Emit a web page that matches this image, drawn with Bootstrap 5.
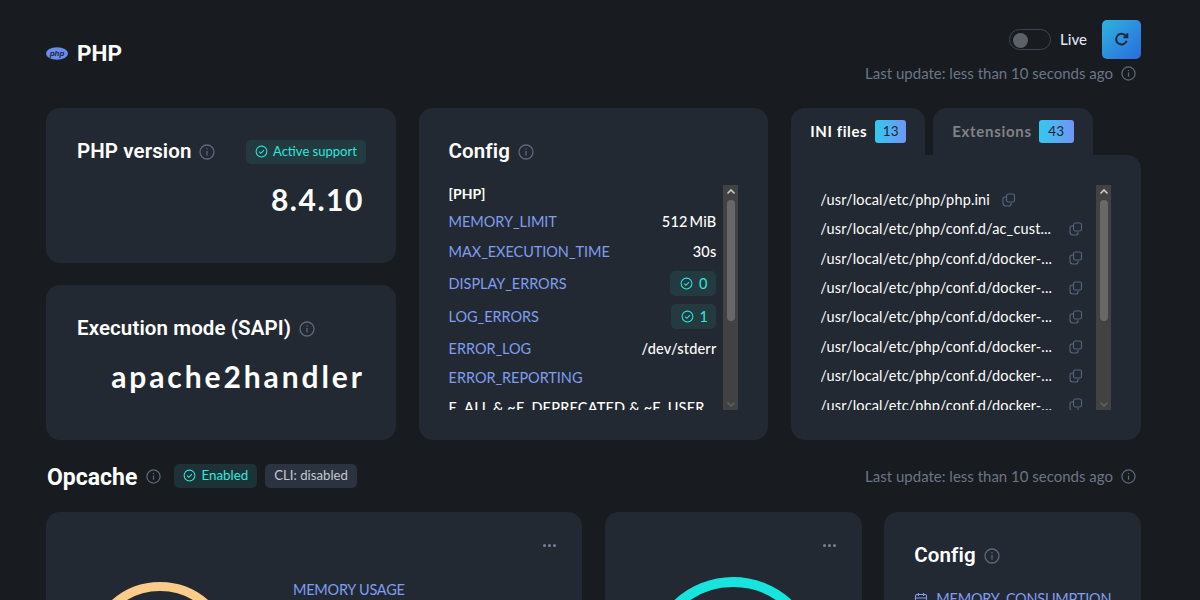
<!DOCTYPE html>
<html lang="en">
<head>
<meta charset="utf-8">
<title>PHP</title>
<link rel="stylesheet" href="https://cdn.jsdelivr.net/npm/bootstrap@5.3.0/dist/css/bootstrap.min.css">
<style>
html,body{height:600px;overflow:hidden}
body{background:#181c20;color:#fff;font-family:"Lato","Noto Sans",sans-serif;font-size:14px}
.pg{width:1095px;margin-left:46px;padding-top:20px}
.rowx{--bs-gutter-x:22.8px;--bs-gutter-y:0}
.hd{font-family:Roboto,sans-serif;font-weight:700;margin:0;color:#fff}
.hd-main{font-size:22.5px}
.hd-op{font-size:23px;margin-left:1px;margin-top:3px}
.hd-card{font-size:20.5px;font-weight:600;line-height:27px;letter-spacing:.1px}
.ico{color:#5f687a;flex:none}
.tile{background:#232932;border-radius:14px}
.muted-t{color:#6b7587;font-size:15px}
.upd-top{margin-top:3px}
.ver{font-size:30px;font-weight:700;letter-spacing:1.5px;line-height:36px;text-align:right;margin-top:16px;padding-right:2px}
.ver-w{letter-spacing:2.9px;padding-right:1px}
.head-line{height:27px}
.pill{display:inline-flex;align-items:center;gap:5px;border-radius:5px;font-size:13px;height:24px;padding:0 9px;background:#233a40;color:#2ee8dd}
.pill-g{background:#2b3340;color:#c3c8d0;font-size:13.2px;margin-top:-1px}
.pill-e{background:#1d3236;font-size:13.4px;margin-top:-1px}
.pill-n{font-size:14.5px;gap:6px;height:25px;padding:0 9px 0 10px}
.pill-one{letter-spacing:-3.6px;padding-right:12px}
.sw{width:42px;height:21px;border:1px solid #3f4652;border-radius:11px;display:block;padding:3px}
.sw i{display:block;width:15px;height:15px;border-radius:50%;background:#5c6168}
.refresh{width:39px;height:39px;border-radius:5px;border:0;background:linear-gradient(135deg,#2fb4dc,#2a6adf);padding:0;display:flex;align-items:center;justify-content:center}
.tabx{height:47px;border-radius:14px 14px 0 0;background:#232932;display:flex;align-items:center;gap:8px;padding:0 0 0 19px;font-weight:700;font-size:15px;letter-spacing:.6px;width:134px}
.tabx.off{width:160px;color:#7f8388;margin-left:8px;letter-spacing:.7px;gap:7px}
.cnt{background:linear-gradient(90deg,#33c9f0,#6f95f5);border-radius:3px;color:#1d2530;font-size:13.5px;font-weight:400;height:23px;padding:0 7.5px;display:flex;align-items:center;letter-spacing:.3px}
.off .cnt{padding:0 9.5px}
.panel{background:#232932;border-radius:0 14px 14px 14px;height:285px;padding:30px 30px 0 30px}
.scrollbox{height:225px;overflow:hidden;position:relative;padding-right:22px}
.sbar{position:absolute;right:0;top:0;bottom:0;width:15px;background:#424242}
.sbar i{position:absolute;left:3.5px;top:15px;width:8px;height:121px;border-radius:4px;background:#686868}
.sbar svg{position:absolute;left:2.5px}
.ln{display:flex;justify-content:space-between;align-items:center;font-size:14.5px}
.ln .k{color:#7f9df0;letter-spacing:-.05px}
.ln .v{font-weight:500;color:#fff;letter-spacing:.2px;word-spacing:-2px}
.ln .tail{padding-top:3px;word-spacing:0}
.ini{display:flex;align-items:center;justify-content:space-between;height:29.4px;font-size:14.5px;color:#fff;letter-spacing:.15px;padding-right:6px;margin-left:-1px}
.ini span{white-space:nowrap}
.ini-first{justify-content:flex-start;gap:12px}
.dots{display:flex;gap:2px;top:32px;right:26px}
.dots i{width:3px;height:3px;background:#77829a;border-radius:50%}
.bluek{color:#7f9df0;font-size:14.5px;letter-spacing:-.25px}
.gauge{position:absolute;border-radius:50%;border-style:solid}
.g1{width:146px;height:146px;left:41px;top:70px;border-width:9px;border-color:#ffcb8a}
.g2{width:172px;height:172px;left:42px;top:65px;border-width:10px;border-color:#17e5dd}
</style>
</head>
<body>
<main class="pg">
  <header class="d-flex justify-content-between" style="height:88px">
    <div class="d-flex align-items-center gap-2" style="height:66px">
      <svg width="22" height="13" viewBox="0 0 22 13" style="margin-right:1px"><ellipse cx="11" cy="6.5" rx="11" ry="6.2" fill="#6b8cee"/><text x="11" y="9" font-size="8" font-style="italic" font-weight="700" font-family="Liberation Sans" text-anchor="middle" fill="#1d2633">php</text></svg>
      <h1 class="hd hd-main">PHP</h1>
    </div>
    <div class="d-flex flex-column align-items-end">
      <div class="d-flex align-items-center">
        <span class="sw"><i></i></span>
        <span class="fw-medium" style="font-size:15px;color:#dfe6f5;margin-left:9px">Live</span>
        <button class="refresh" style="margin-left:15px" type="button" aria-label="Refresh"><svg width="15" height="15" viewBox="0 0 14 14" fill="none" stroke="#1b2a3a" stroke-width="1.9"><path d="M11.8 8.2A5 5 0 1 1 10.6 3.2L12 4.6"/><path d="M12.4 1.2v3.6H8.8"/></svg></button>
      </div>
      <div class="d-flex align-items-center muted-t gap-2 upd-top" style="padding-right:5px">Last update: less than 10 seconds ago
        <svg class="ico" width="15" height="15" viewBox="0 0 16 16" fill="none" stroke="currentColor" stroke-width="1.3"><circle cx="8" cy="8" r="7"/><path d="M8 7v4.5M8 4.2v1.2"/></svg>
      </div>
    </div>
  </header>

  <div class="row rowx" style="height:332px">
    <div class="col-4 d-flex flex-column justify-content-between">
      <section class="tile" style="height:155px;padding:30px 30px 0 31px">
        <div class="d-flex align-items-center head-line">
          <h2 class="hd hd-card">PHP version</h2>
          <svg class="ico ms-2" width="16" height="16" viewBox="0 0 16 16" fill="none" stroke="currentColor" stroke-width="1.3"><circle cx="8" cy="8" r="7"/><path d="M8 7v4.5M8 4.2v1.2"/></svg>
          <span class="pill ms-auto"><svg width="13" height="13" viewBox="0 0 14 14" fill="none" stroke="currentColor" stroke-width="1.1"><circle cx="7" cy="7" r="5.8"/><path d="M4.4 7.2l1.9 1.7 3.4-3.4"/></svg>Active support</span>
        </div>
        <div class="ver">8.4.10</div>
      </section>
      <section class="tile" style="height:155px;padding:30px 30px 0 31px">
        <div class="d-flex align-items-center head-line">
          <h2 class="hd hd-card">Execution mode (SAPI)</h2>
          <svg class="ico ms-2" width="16" height="16" viewBox="0 0 16 16" fill="none" stroke="currentColor" stroke-width="1.3"><circle cx="8" cy="8" r="7"/><path d="M8 7v4.5M8 4.2v1.2"/></svg>
        </div>
        <div class="ver ver-w">apache2handler</div>
      </section>
    </div>
    <div class="col-4">
      <section class="tile h-100" style="padding:30px 30px 0 30px">
        <div class="d-flex align-items-center head-line">
          <h2 class="hd hd-card">Config</h2>
          <svg class="ico ms-2" width="16" height="16" viewBox="0 0 16 16" fill="none" stroke="currentColor" stroke-width="1.3"><circle cx="8" cy="8" r="7"/><path d="M8 7v4.5M8 4.2v1.2"/></svg>
        </div>
        <div class="scrollbox" style="margin-top:20px">
          <div class="sbar"><svg style="top:3px" width="10" height="8" viewBox="0 0 10 8" fill="none" stroke="#c8c8c8" stroke-width="1.6"><path d="M1.5 5.5L5 2l3.5 3.5"/></svg><i></i><svg style="bottom:2px" width="10" height="8" viewBox="0 0 10 8" fill="none" stroke="#5f5f5f" stroke-width="1.6"><path d="M1.5 2.5L5 6l3.5-3.5"/></svg></div>
          <div class="fw-bold" style="font-size:14px;height:22px;line-height:18px">[PHP]</div>
          <div class="ln" style="height:29px"><span class="k">MEMORY_LIMIT</span><span class="v">512 MiB</span></div>
          <div class="ln" style="height:31px"><span class="k">MAX_EXECUTION_TIME</span><span class="v">30s</span></div>
          <div class="ln" style="height:33px"><span class="k">DISPLAY_ERRORS</span><span class="pill pill-n"><svg width="13" height="13" viewBox="0 0 14 14" fill="none" stroke="currentColor" stroke-width="1.1"><circle cx="7" cy="7" r="5.8"/><path d="M4.4 7.2l1.9 1.7 3.4-3.4"/></svg>0</span></div>
          <div class="ln" style="height:33px"><span class="k">LOG_ERRORS</span><span class="pill pill-n pill-one"><svg width="13" height="13" viewBox="0 0 14 14" fill="none" stroke="currentColor" stroke-width="1.1"><circle cx="7" cy="7" r="5.8"/><path d="M4.4 7.2l1.9 1.7 3.4-3.4"/></svg>1</span></div>
          <div class="ln" style="height:31px"><span class="k">ERROR_LOG</span><span class="v">/dev/stderr</span></div>
          <div class="ln" style="height:28px"><span class="k">ERROR_REPORTING</span></div>
          <div class="ln" style="height:28px"><span class="v text-nowrap tail">E_ALL &amp; ~E_DEPRECATED &amp; ~E_USER</span></div>
        </div>
      </section>
    </div>
    <div class="col-4">
      <div class="d-flex">
        <div class="tabx">INI files <span class="cnt">13</span></div>
        <div class="tabx off">Extensions <span class="cnt">43</span></div>
      </div>
      <div class="panel">
        <div class="scrollbox">
          <div class="sbar"><svg style="top:3px" width="10" height="8" viewBox="0 0 10 8" fill="none" stroke="#c8c8c8" stroke-width="1.6"><path d="M1.5 5.5L5 2l3.5 3.5"/></svg><i></i><svg style="bottom:2px" width="10" height="8" viewBox="0 0 10 8" fill="none" stroke="#5f5f5f" stroke-width="1.6"><path d="M1.5 2.5L5 6l3.5-3.5"/></svg></div>
          <div class="ini ini-first"><span>/usr/local/etc/php/php.ini</span><svg width="14" height="14" viewBox="0 0 14 14" fill="none" stroke="#556680" stroke-width="1.1"><rect x="4.5" y="1" width="8" height="8" rx="1.8"/><path d="M4 4H3a2 2 0 0 0-2 2v4a3 3 0 0 0 3 3h3a2 2 0 0 0 2-2v-1"/></svg></div>
          <div class="ini"><span>/usr/local/etc/php/conf.d/ac_cust...</span><svg width="14" height="14" viewBox="0 0 14 14" fill="none" stroke="#556680" stroke-width="1.1"><rect x="4.5" y="1" width="8" height="8" rx="1.8"/><path d="M4 4H3a2 2 0 0 0-2 2v4a3 3 0 0 0 3 3h3a2 2 0 0 0 2-2v-1"/></svg></div>
          <div class="ini"><span>/usr/local/etc/php/conf.d/docker-...</span><svg width="14" height="14" viewBox="0 0 14 14" fill="none" stroke="#556680" stroke-width="1.1"><rect x="4.5" y="1" width="8" height="8" rx="1.8"/><path d="M4 4H3a2 2 0 0 0-2 2v4a3 3 0 0 0 3 3h3a2 2 0 0 0 2-2v-1"/></svg></div>
          <div class="ini"><span>/usr/local/etc/php/conf.d/docker-...</span><svg width="14" height="14" viewBox="0 0 14 14" fill="none" stroke="#556680" stroke-width="1.1"><rect x="4.5" y="1" width="8" height="8" rx="1.8"/><path d="M4 4H3a2 2 0 0 0-2 2v4a3 3 0 0 0 3 3h3a2 2 0 0 0 2-2v-1"/></svg></div>
          <div class="ini"><span>/usr/local/etc/php/conf.d/docker-...</span><svg width="14" height="14" viewBox="0 0 14 14" fill="none" stroke="#556680" stroke-width="1.1"><rect x="4.5" y="1" width="8" height="8" rx="1.8"/><path d="M4 4H3a2 2 0 0 0-2 2v4a3 3 0 0 0 3 3h3a2 2 0 0 0 2-2v-1"/></svg></div>
          <div class="ini"><span>/usr/local/etc/php/conf.d/docker-...</span><svg width="14" height="14" viewBox="0 0 14 14" fill="none" stroke="#556680" stroke-width="1.1"><rect x="4.5" y="1" width="8" height="8" rx="1.8"/><path d="M4 4H3a2 2 0 0 0-2 2v4a3 3 0 0 0 3 3h3a2 2 0 0 0 2-2v-1"/></svg></div>
          <div class="ini"><span>/usr/local/etc/php/conf.d/docker-...</span><svg width="14" height="14" viewBox="0 0 14 14" fill="none" stroke="#556680" stroke-width="1.1"><rect x="4.5" y="1" width="8" height="8" rx="1.8"/><path d="M4 4H3a2 2 0 0 0-2 2v4a3 3 0 0 0 3 3h3a2 2 0 0 0 2-2v-1"/></svg></div>
          <div class="ini"><span>/usr/local/etc/php/conf.d/docker-...</span><svg width="14" height="14" viewBox="0 0 14 14" fill="none" stroke="#556680" stroke-width="1.1"><rect x="4.5" y="1" width="8" height="8" rx="1.8"/><path d="M4 4H3a2 2 0 0 0-2 2v4a3 3 0 0 0 3 3h3a2 2 0 0 0 2-2v-1"/></svg></div>
        </div>
      </div>
    </div>
  </div>

  <div class="d-flex align-items-center" style="height:72px">
    <h2 class="hd hd-op">Opcache</h2>
    <svg class="ico" style="margin-left:9px" width="15" height="15" viewBox="0 0 16 16" fill="none" stroke="currentColor" stroke-width="1.3"><circle cx="8" cy="8" r="7"/><path d="M8 7v4.5M8 4.2v1.2"/></svg>
    <span class="pill pill-e" style="margin-left:13px"><svg width="13" height="13" viewBox="0 0 14 14" fill="none" stroke="currentColor" stroke-width="1.1"><circle cx="7" cy="7" r="5.8"/><path d="M4.4 7.2l1.9 1.7 3.4-3.4"/></svg>Enabled</span>
    <span class="pill pill-g ms-2">CLI: disabled</span>
    <div class="d-flex align-items-center muted-t gap-2 ms-auto" style="padding-right:5px">Last update: less than 10 seconds ago
      <svg class="ico" width="15" height="15" viewBox="0 0 16 16" fill="none" stroke="currentColor" stroke-width="1.3"><circle cx="8" cy="8" r="7"/><path d="M8 7v4.5M8 4.2v1.2"/></svg>
    </div>
  </div>

  <div class="row rowx">
    <div class="col-6">
      <section class="tile position-relative" style="height:300px">
        <div class="dots position-absolute"><i></i><i></i><i></i></div>
        <div class="gauge g1"></div>
        <div class="bluek position-absolute" style="left:247px;top:67px">MEMORY USAGE</div>
      </section>
    </div>
    <div class="col-3">
      <section class="tile position-relative" style="height:300px">
        <div class="dots position-absolute"><i></i><i></i><i></i></div>
        <div class="gauge g2"></div>
      </section>
    </div>
    <div class="col-3">
      <section class="tile" style="height:300px;padding:30px 20px 0 30px">
        <div class="d-flex align-items-center head-line">
          <h2 class="hd hd-card">Config</h2>
          <svg class="ico ms-2" width="16" height="16" viewBox="0 0 16 16" fill="none" stroke="currentColor" stroke-width="1.3"><circle cx="8" cy="8" r="7"/><path d="M8 7v4.5M8 4.2v1.2"/></svg>
        </div>
        <div class="d-flex align-items-center gap-2 bluek" style="margin-top:19px"><svg width="14" height="14" viewBox="0 0 14 14" fill="none" stroke="#7f9df0" stroke-width="1.1"><rect x="1.5" y="2.5" width="11" height="10" rx="1.5"/><path d="M1.5 6h11M4.5 1v3M9.5 1v3"/></svg>MEMORY_CONSUMPTION</div>
      </section>
    </div>
  </div>
</main>
<script src="https://cdn.jsdelivr.net/npm/bootstrap@5.3.0/dist/js/bootstrap.bundle.min.js"></script>
</body>
</html>
